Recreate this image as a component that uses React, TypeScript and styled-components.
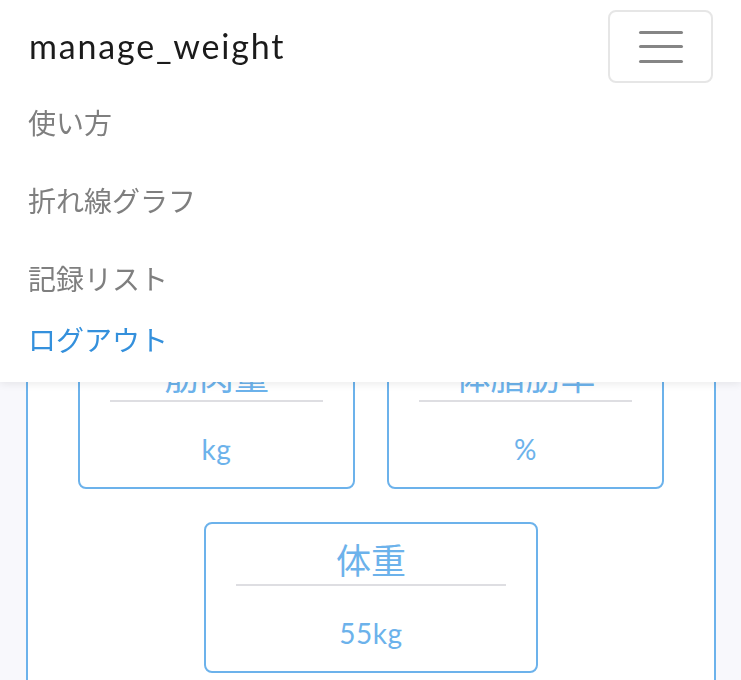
import React from "react";
import styled, { createGlobalStyle } from "styled-components";

const GlobalStyle = createGlobalStyle`
  html, body { margin: 0; padding: 0; }
  body {
    background: #f8f8fc;
    font-family: "Lato", "Noto Sans CJK JP", sans-serif;
    -webkit-font-smoothing: antialiased;
  }
`;

const Navbar = styled.nav`
  position: fixed;
  top: 0;
  left: 0;
  right: 0;
  z-index: 10;
  background: #ffffff;
  box-shadow: 0 2px 8px rgba(0, 0, 0, 0.08);
  padding: 10px 28px 19px 28px;
  box-sizing: border-box;
  height: 382px;
`;

const NavHeader = styled.div`
  display: flex;
  align-items: center;
  justify-content: space-between;
  height: 73px;
`;

const Brand = styled.a`
  font-family: "Lato", "Noto Sans CJK JP", sans-serif;
  font-size: 34px;
  letter-spacing: 1.8px;
  color: #1b1b1b;
  text-decoration: none;
  margin-left: 1px;
  margin-top: -2px;
`;

const Toggler = styled.button`
  width: 105px;
  height: 73px;
  border: 2px solid #e6e6e6;
  border-radius: 8px;
  background: #fff;
  display: flex;
  flex-direction: column;
  align-items: center;
  justify-content: center;
  gap: 11.5px;
  padding: 0;
`;

const Bar = styled.span`
  display: block;
  width: 44px;
  height: 3px;
  border-radius: 2px;
  background: #858585;
`;

const NavList = styled.ul`
  list-style: none;
  margin: 0;
  padding: 0;
  display: flex;
  flex-direction: column;
`;

const NavItem = styled.li<{ $compact?: boolean }>`
  height: ${(p) => (p.$compact ? "44px" : "78px")};
  display: flex;
  align-items: center;
`;

const NavLink = styled.a<{ $accent?: boolean }>`
  font-family: "Noto Sans CJK JP", sans-serif;
  font-size: 28px;
  color: ${(p) => (p.$accent ? "#3490dc" : "#7f7f7f")};
  text-decoration: none;
`;

const Main = styled.main`
  padding: 290px 25px 0 26px;
`;

const Panel = styled.section`
  background: #ffffff;
  border: 2px solid #6cb2eb;
  padding: 46px 50px 40px 50px;
  min-height: 600px;
`;

const CardRow = styled.div`
  display: grid;
  grid-template-columns: 1fr 1fr;
  gap: 32px;
`;

const WeightRow = styled.div`
  display: flex;
  justify-content: center;
  margin-top: 33px;
`;

const StatCard = styled.div<{ $width?: number }>`
  box-sizing: border-box;
  width: ${(p) => (p.$width ? `${p.$width}px` : "auto")};
  border: 2px solid #6cb2eb;
  border-radius: 8px;
  padding: 13px 30px 17px 30px;
  text-align: center;
  color: #6cb2eb;
  background: #fff;
`;

const StatLabel = styled.div`
  font-family: "Noto Sans CJK JP", sans-serif;
  font-size: 35px;
  line-height: 43px;
  height: 43px;
`;

const Divider = styled.hr`
  margin: 4px 0 0 0;
  border: 0;
  border-top: 2px solid #dedee2;
`;

const StatValue = styled.div`
  margin-top: 26px;
  font-family: "Lato", "Noto Sans CJK JP", sans-serif;
  font-size: 28px;
  letter-spacing: 0.5px;
  line-height: 42px;
  height: 42px;
`;

const Stat = ({ label, value, width }: { label: string; value: string; width?: number }) => (
  <StatCard $width={width}>
    <StatLabel>{label}</StatLabel>
    <Divider />
    <StatValue>{value}</StatValue>
  </StatCard>
);

export default function App() {
  return (
    <>
      <GlobalStyle />
      <Navbar>
        <NavHeader>
          <Brand href="#">manage_weight</Brand>
          <Toggler aria-label="menu">
            <Bar />
            <Bar />
            <Bar />
          </Toggler>
        </NavHeader>
        <NavList>
          <NavItem><NavLink href="#">使い方</NavLink></NavItem>
          <NavItem><NavLink href="#">折れ線グラフ</NavLink></NavItem>
          <NavItem><NavLink href="#">記録リスト</NavLink></NavItem>
          <NavItem $compact><NavLink href="#" $accent>ログアウト</NavLink></NavItem>
        </NavList>
      </Navbar>
      <Main>
        <Panel>
          <CardRow>
            <Stat label="筋肉量" value="kg" />
            <Stat label="体脂肪率" value="%" />
          </CardRow>
          <WeightRow>
            <Stat label="体重" value="55kg" width={334} />
          </WeightRow>
        </Panel>
      </Main>
    </>
  );
}
